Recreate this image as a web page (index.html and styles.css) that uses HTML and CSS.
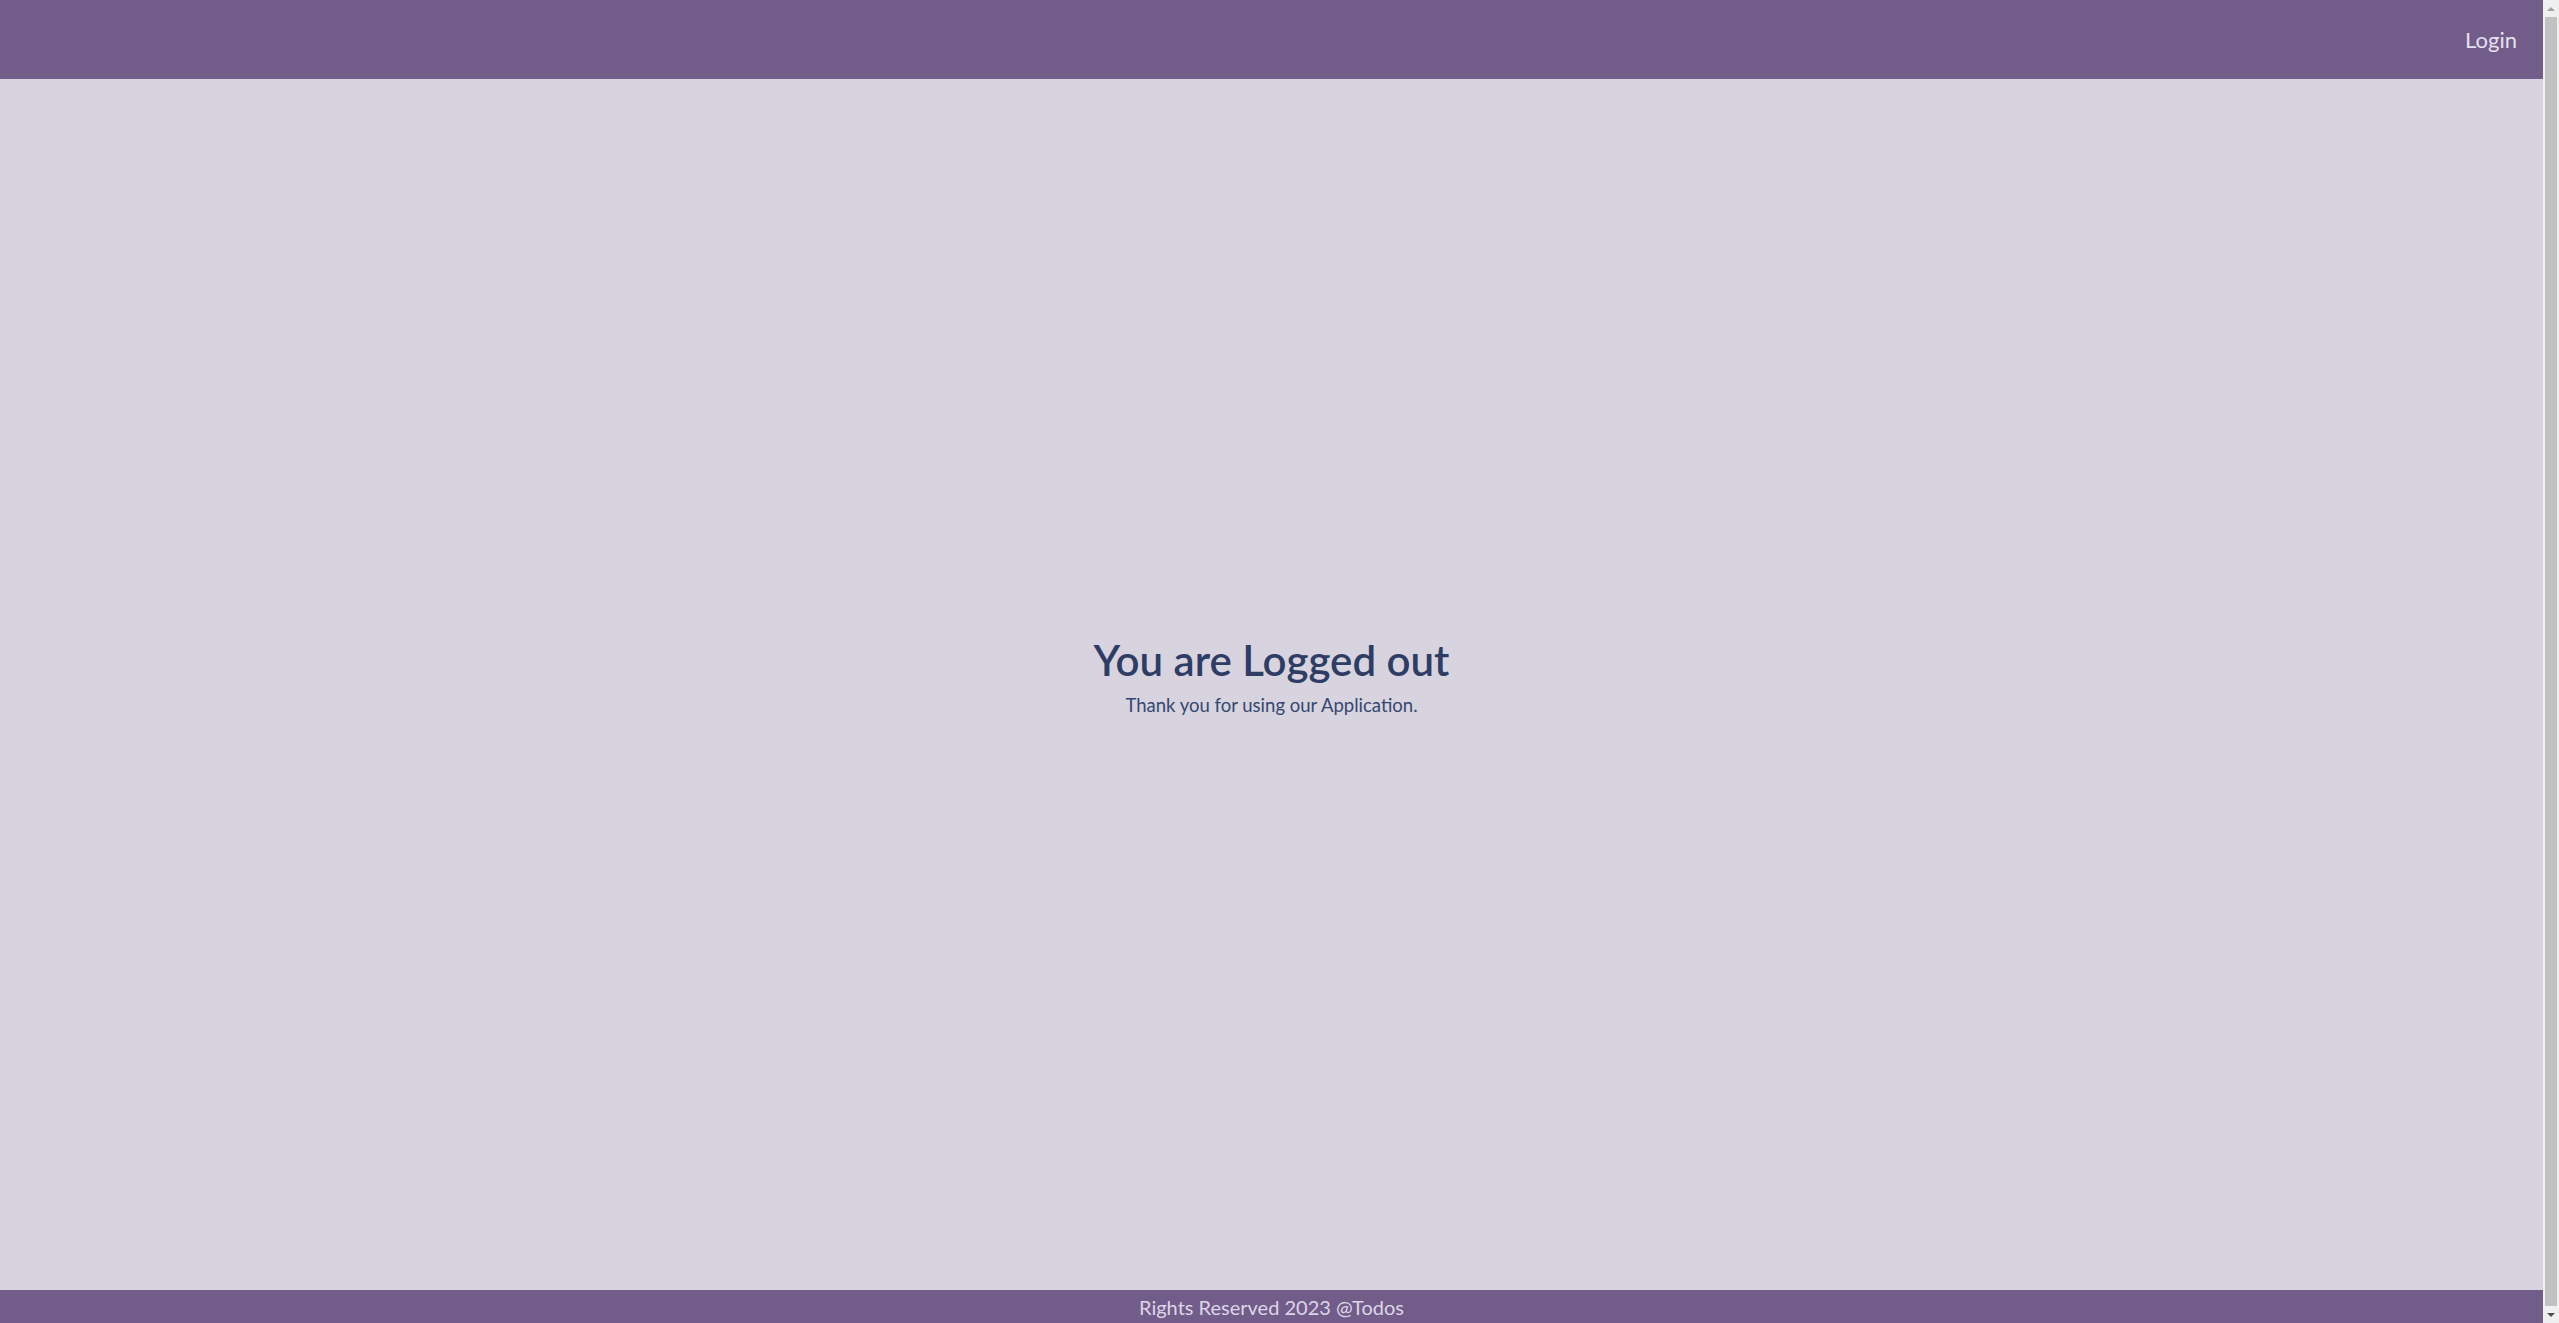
FILE: index.html
```html
<!DOCTYPE html>
<html lang="en">
<head>
<meta charset="utf-8">
<title>Todos</title>
<link rel="stylesheet" href="styles.css">
</head>
<body>
<div class="frame">
  <div class="page">
    <header class="navbar">
      <a class="nav-link" href="#">Login</a>
    </header>
    <main class="content">
      <h1 class="title">You are Logged out</h1>
      <p class="subtitle">Thank you for using our Application.</p>
    </main>
    <footer class="footer">Rights Reserved 2023 @Todos</footer>
  </div>
  <div class="scrollbar">
    <div class="sb-arrow sb-up"></div>
    <div class="sb-track"><div class="sb-thumb"></div></div>
    <div class="sb-arrow sb-down"></div>
  </div>
</div>
</body>
</html>
```
FILE: styles.css
```css
html, body {
  margin: 0;
  padding: 0;
  height: 100%;
  overflow: hidden;
}
body {
  font-family: Lato, "Open Sans", sans-serif;
  background: #d7d4df;
}
.frame {
  display: flex;
  height: 1323px;
}
.page {
  flex: 1;
  display: flex;
  flex-direction: column;
  background: #d7d4df;
}
.navbar {
  height: 79px;
  background: #725c8a;
  display: flex;
  align-items: center;
  justify-content: flex-end;
  padding-right: 26px;
  box-sizing: border-box;
}
.nav-link {
  color: #e6e1ee;
  text-decoration: none;
  font-size: 22px;
}
.content {
  flex: 1;
  display: flex;
  flex-direction: column;
  align-items: center;
  justify-content: center;
  color: #2f3d64;
  padding-bottom: 18px;
}
.title {
  margin: 0;
  font-size: 42px;
  line-height: 50px;
  font-weight: 600;
}
.subtitle {
  margin: 8px 0 0;
  font-size: 18.5px;
  line-height: 24px;
  color: #35476f;
}
.footer {
  height: 33px;
  background: #725c8a;
  color: #ddd6e6;
  font-size: 20px;
  display: flex;
  align-items: center;
  justify-content: center;
}
.scrollbar {
  width: 16px;
  background: #f0f0f0;
  display: flex;
  flex-direction: column;
}
.sb-arrow {
  height: 17px;
  display: flex;
  align-items: center;
  justify-content: center;
}
.sb-up::before {
  content: "";
  border-left: 4px solid transparent;
  border-right: 4px solid transparent;
  border-bottom: 4px solid #a3a3a3;
}
.sb-down::before {
  content: "";
  border-left: 4px solid transparent;
  border-right: 4px solid transparent;
  border-top: 4px solid #505050;
}
.sb-track {
  flex: 1;
  padding: 0 2px;
}
.sb-thumb {
  height: 100%;
  background: #c1c1c1;
}
```
